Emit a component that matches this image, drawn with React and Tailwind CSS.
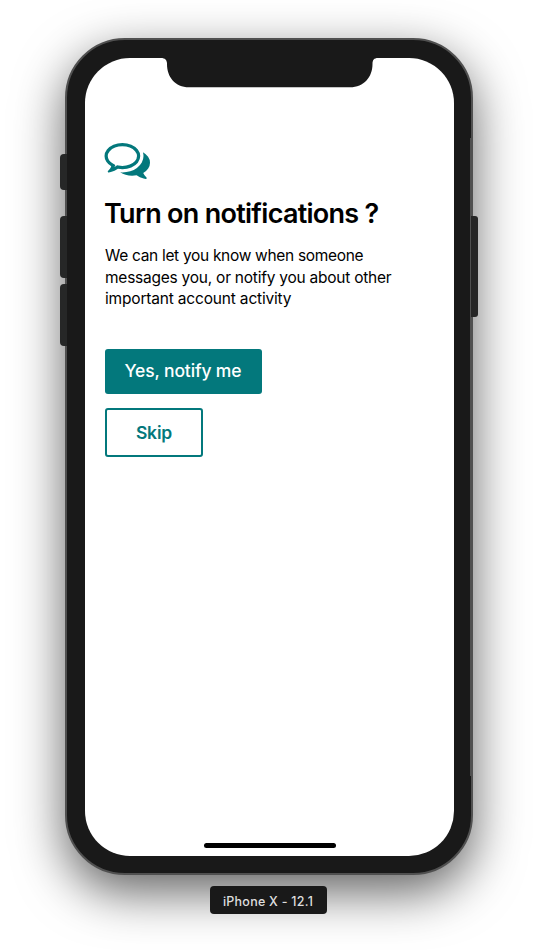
function CommentsIcon() {
  return (
    <svg className="-ml-px block h-9 w-[46px]" viewBox="-20 256 1812 1408" preserveAspectRatio="none" fill="#03787c">
      <path d="M704 384q-153 0-286 52t-211.5 141T128 768q0 82 53 158t149 132l97 56-35 84q34-20 62-39l44-31 53 10q78 14 153 14 153 0 286-52t211.5-141T1280 768t-78.500-191T990 436t-286-52zm0-128q191 0 353.500 68.500T1314 511t94 257-94 257-256.500 186.500T704 1280q-86 0-176-16-124 88-278 128-36 9-86 16h-3q-11 0-20.500-8t-11.500-21q-1-3-1-6.500t.5-6.500 2-6l2.500-5 3.500-5.500 4-5 4.500-5 4-4.500q5-6 23-25t26-29.500 22.500-29 25-38.500 20.500-44q-124-72-195-177T0 768q0-139 94-257t256.500-186.500T704 256zM1526 1425q10 24 20.500 44t25 38.500 22.500 29 26 29.500 23 25q1 1 4 4.500t4.500 5 4 5 3.500 5.500l2.500 5 2 6 .5 6.500-1 6.500q-3 14-13 22t-22 7q-50-7-86-16-154-40-278-128-90 16-176 16-271 0-472-132 58 4 88 4 161 0 309-45t264-129q125-92 192-212t67-254q0-77-23-152 129 71 204 178t75 230q0 120-71 224.500t-195 176.500z" />
    </svg>
  );
}

function Notch() {
  return (
    <svg className="block h-[30px] w-[217px] shrink-0 self-center" viewBox="0 1 217 30" fill="#191919">
      <path d="M0 0V1C4 1 6 3 6 7C6 20 14 30.300 28 30.300H189C203 30.300 211.500 20 211.500 7C211.500 3 213 1 217 1V0Z" />
    </svg>
  );
}

export default function App() {
  return (
    <div className="flex h-[950px] flex-col items-center gap-[11px] overflow-hidden bg-white pt-[38px] font-['Inter','Liberation_Sans',sans-serif] text-black">
      <div className="flex">
        {/* Mute switch and volume keys */}
        <div className="z-10 -mr-0.5 flex w-[7px] flex-col pt-[116px]">
          <div className="mb-[26px] h-9 rounded-l-[4px] bg-[#262727]" />
          <div className="mb-1.5 h-[62px] rounded-l-[4px] bg-[#262727]" />
          <div className="h-[62px] rounded-l-[4px] bg-[#262727]" />
        </div>

        <div className="relative flex h-[837px] w-[408px] rounded-[60px] border-2 border-[#505050] bg-[#191919] pl-[18px] pt-[18px] shadow-[0_17px_50px_rgba(0,0,0,0.62)]">
          <div className="absolute -right-px top-[98px] h-[638px] w-0.5 bg-[#505050]" />
          <main className="flex h-[798px] w-[369px] flex-col items-start overflow-hidden rounded-[45px] bg-white px-5 pb-2">
            <Notch />
            <section className="flex flex-col items-start pt-[55px]">
              <CommentsIcon />
              <h1 className="-ml-px mt-[19px] whitespace-nowrap text-[27px] font-semibold leading-8 tracking-[-0.720px]">Turn on notifications ?</h1>
              <p className="mt-[15px] whitespace-nowrap text-[15.5px] leading-[21.500px]">
                <span className="block tracking-[-0.310px]">We can let you know when someone</span>
                <span className="block tracking-[-0.240px]">messages you, or notify you about other</span>
                <span className="block tracking-[-0.180px]">important account activity</span>
              </p>
              <div className="flex flex-col items-start gap-3.5 pt-[39px]">
                <button className="h-[45px] w-[157px] whitespace-nowrap rounded-[3px] bg-[#03787c] pr-px pt-px text-[17.500px] font-medium tracking-[-0.140px] text-white">Yes, notify me</button>
                <button className="h-[49px] w-[98px] rounded-[3px] border-2 border-[#03787c] pt-0.5 text-[17.500px] font-semibold tracking-[-0.150px] text-[#03787c]">Skip</button>
              </div>
            </section>
            <div className="mt-auto h-[5px] w-[132px] self-center rounded-full bg-black" />
          </main>
        </div>

        {/* Side key */}
        <div className="z-10 -ml-0.5 flex w-[7px] flex-col pt-[178px]">
          <div className="h-[101px] rounded-r-[3px] bg-[#262626]" />
        </div>
      </div>

      <div className="relative mr-0.5 flex h-7 w-[117px] shrink-0 items-center justify-center whitespace-nowrap rounded-[4px] bg-[#191919] pt-1 text-[12.500px] font-medium tracking-[0.250px] text-[#dedede]">iPhone X - 12.1</div>
    </div>
  );
}
